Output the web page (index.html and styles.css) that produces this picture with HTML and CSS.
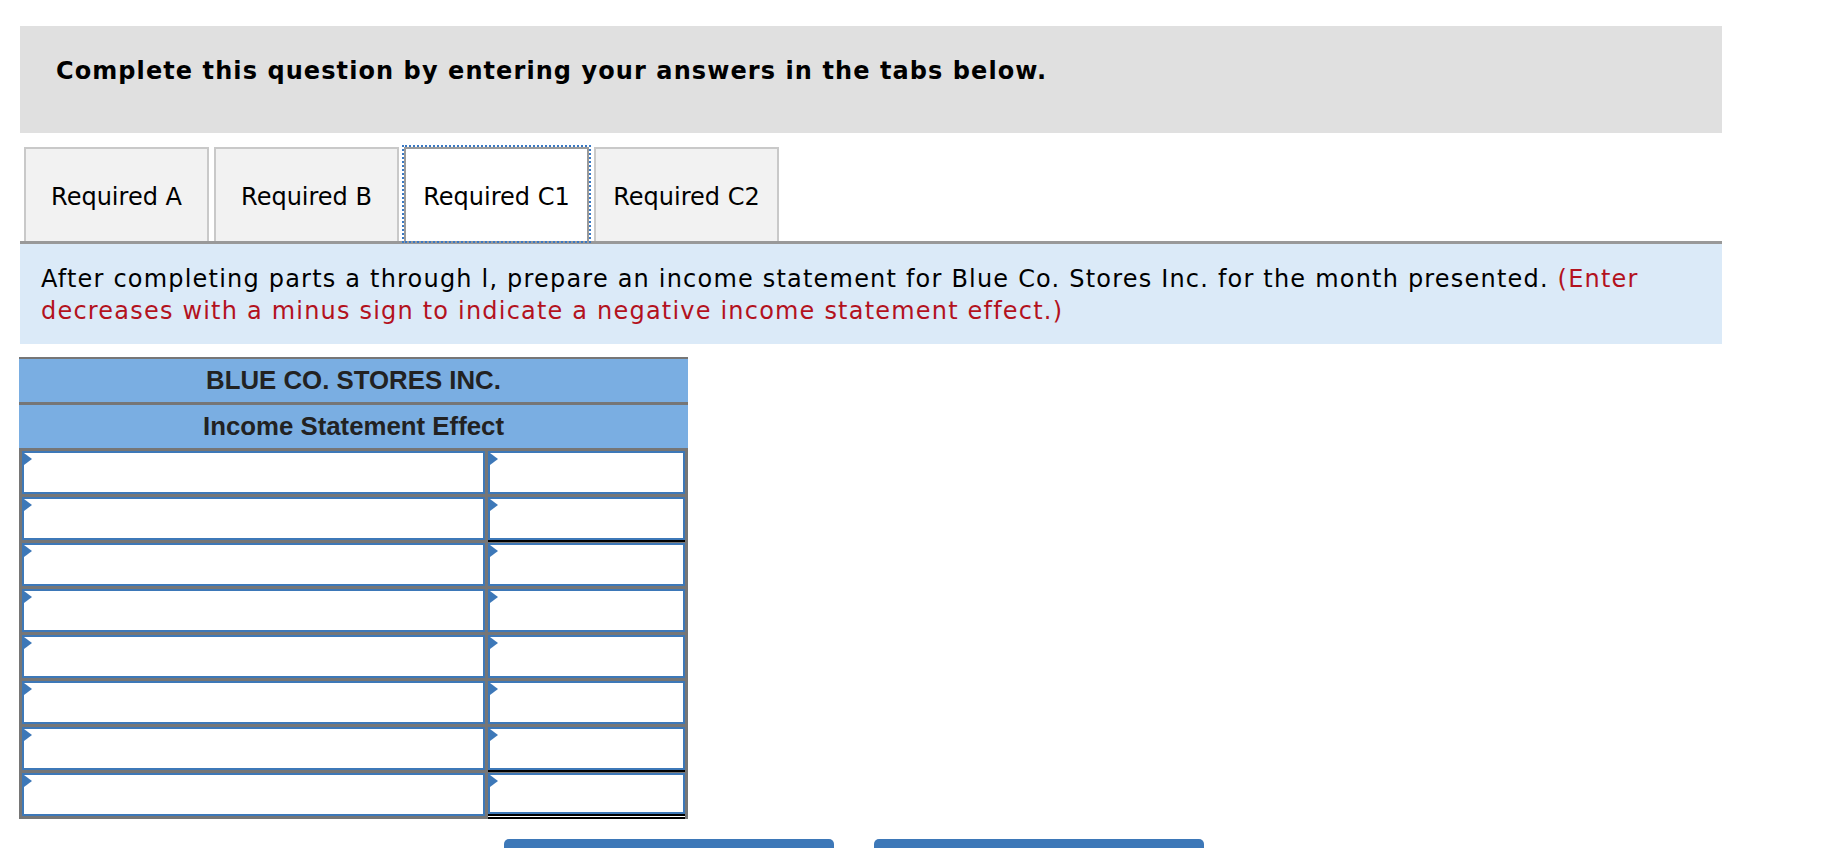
FILE: index.html
```html
<!DOCTYPE html>
<html lang="en">
<head>
<meta charset="utf-8">
<title>Required C1</title>
<link rel="stylesheet" href="styles.css">
</head>
<body>
<div class="page">
  <div class="intro">
    <p class="intro-text">Complete this question by entering your answers in the tabs below.</p>
  </div>

  <div class="tabs">
    <div class="tab">Required A</div>
    <div class="tab">Required B</div>
    <div class="tab active">Required C1</div>
    <div class="tab">Required C2</div>
  </div>

  <div class="instructions">
    <p>After completing parts a through l, prepare an income statement for Blue Co. Stores Inc. for the month presented. <span class="note">(Enter decreases with a minus sign to indicate a negative income statement effect.)</span></p>
  </div>

  <div class="sheet">
    <div class="head head-top">BLUE CO. STORES INC.</div>
    <div class="head">Income Statement Effect</div>

    <div class="cell"><input type="text"></div>
    <div class="cell"><input type="text"></div>

    <div class="cell"><input type="text"></div>
    <div class="cell underline"><input type="text"></div>

    <div class="cell"><input type="text"></div>
    <div class="cell"><input type="text"></div>

    <div class="cell"><input type="text"></div>
    <div class="cell"><input type="text"></div>

    <div class="cell"><input type="text"></div>
    <div class="cell"><input type="text"></div>

    <div class="cell"><input type="text"></div>
    <div class="cell"><input type="text"></div>

    <div class="cell"><input type="text"></div>
    <div class="cell underline"><input type="text"></div>

    <div class="cell"><input type="text"></div>
    <div class="total"><div class="cell"><input type="text"></div></div>
  </div>

  <div class="actions">
    <button class="btn" type="button"></button>
    <button class="btn" type="button"></button>
  </div>
</div>
</body>
</html>
```

FILE: styles.css
```css
html, body {
  margin: 0;
  padding: 0;
  background: #ffffff;
}

body {
  font-family: "DejaVu Sans", Verdana, sans-serif;
  color: #000;
  overflow: hidden;
}

.page {
  padding: 26px 0 0 20px;
  width: 1702px;
}

.intro {
  background: #e0e0e0;
  height: 107px;
  box-sizing: border-box;
  padding: 31px 0 0 36px;
}

.intro-text {
  margin: 0;
  font-weight: bold;
  font-size: 24px;
  letter-spacing: 1.08px;
  line-height: 28px;
}

.tabs {
  display: flex;
  gap: 5px;
  padding: 14px 0 0 4px;
  height: 94px;
  box-sizing: content-box;
}

.tab {
  width: 185px;
  box-sizing: border-box;
  background: #f2f2f2;
  border: 2px solid #c9c9c9;
  border-bottom: none;
  display: flex;
  align-items: center;
  justify-content: center;
  padding-top: 4px;
  font-size: 24px;
  color: #000;
}

.tab.active {
  background: #ffffff;
  border-color: #9a9a9a;
  outline: 2px dotted #3a78c2;
  outline-offset: 0;
}

.instructions {
  background: #dbeaf8;
  border-top: 3px solid #999999;
  padding: 19px 21px 17px 21px;
}

.instructions p {
  margin: 0;
  font-size: 24px;
  letter-spacing: 1.2px;
  line-height: 32px;
  color: #000;
}

.note {
  color: #b3121e;
}

.sheet {
  margin: 13px 0 0 -1px;
  width: 669px;
  box-sizing: border-box;
  background: #767676;
  padding: 2px 3px 3px 3px;
  display: grid;
  grid-template-columns: 463px 197px;
  grid-auto-rows: 43px;
  gap: 3px;
}

.head {
  grid-column: 1 / 3;
  background: #7aaee2;
  margin: 0 -3px;
  display: flex;
  align-items: center;
  justify-content: center;
  font-family: "Liberation Sans", Arial, sans-serif;
  font-weight: bold;
  font-size: 25.8px;
  color: #222222;
}

.cell {
  position: relative;
  background: #ffffff;
  border: 2px solid #3d78b8;
  box-sizing: border-box;
  min-height: 0;
}

.cell::before {
  content: "";
  position: absolute;
  left: 0;
  top: 0;
  width: 0;
  height: 0;
  border-left: 8px solid #3d78b8;
  border-top: 6.5px solid transparent;
  border-bottom: 6.5px solid transparent;
}

.cell input {
  display: block;
  width: 100%;
  height: 100%;
  border: none;
  outline: none;
  background: transparent;
  padding: 0;
  margin: 0;
  box-sizing: border-box;
}

.cell.underline {
  box-shadow: 0 2px 0 #000000;
}

.total {
  margin-bottom: -3px;
  background: #ffffff;
  border-bottom: 5px double #000000;
  display: flex;
  flex-direction: column;
}

.total .cell {
  flex: 1;
}

.actions {
  display: flex;
  gap: 40px;
  padding: 20px 0 0 484px;
}

.btn {
  width: 330px;
  height: 50px;
  background: #3d78b8;
  border: none;
  border-radius: 5px;
  padding: 0;
}
```
